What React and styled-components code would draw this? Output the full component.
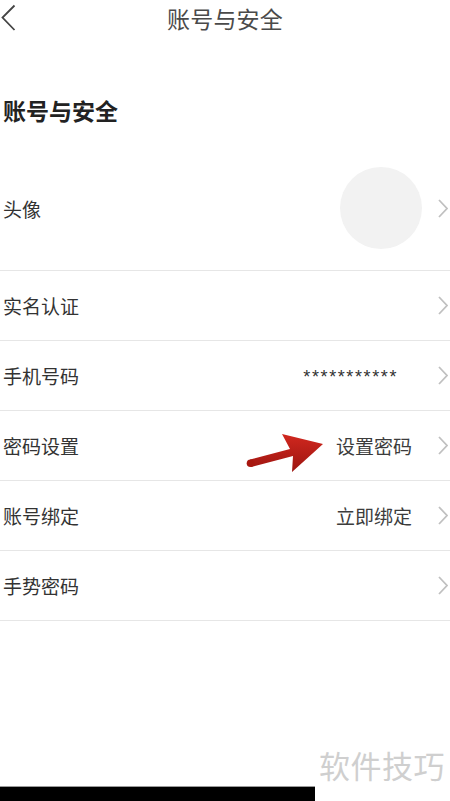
import styled, { createGlobalStyle } from "styled-components";

const GlobalStyle = createGlobalStyle`
  html, body {
    margin: 0;
    padding: 0;
    background: #fff;
  }
  body {
    font-family: "Noto Sans CJK SC", "Noto Sans", sans-serif;
    color: #333;
  }
`;

const Page = styled.div`
  position: relative;
  width: 450px;
  height: 801px;
  overflow: hidden;
  background: #fff;
`;

const NavBar = styled.div`
  height: 36px;
  display: flex;
  align-items: center;
  justify-content: center;
  position: relative;
`;

const BackButton = styled.div`
  position: absolute;
  left: 1px;
  top: 4px;
  width: 16px;
  height: 28px;
  display: flex;
  align-items: center;
`;

const NavTitle = styled.div`
  font-size: 23px;
  font-weight: 400;
  color: #4a4a4a;
  line-height: 36px;
  letter-spacing: 0.2px;
`;

const Heading = styled.h1`
  margin: 59px 0 21px;
  padding-left: 3px;
  font-size: 23px;
  line-height: 30px;
  font-weight: 700;
  color: #222;
`;

const List = styled.div`
  display: flex;
  flex-direction: column;
`;

const Row = styled.div`
  height: ${({ $tall }) => ($tall ? "124px" : "69px")};
  display: flex;
  align-items: center;
  padding: 0 2px 0 3px;
  border-bottom: 1px solid #e6e6e6;
`;

const Label = styled.div`
  flex: 1;
  font-size: 19px;
  color: #333;
`;

const Value = styled.div`
  font-size: 19px;
  color: #3c3c3c;
  margin-right: 26px;
`;

const Stars = styled.div`
  font-family: "Liberation Sans", sans-serif;
  font-size: 18px;
  letter-spacing: 1.6px;
  color: #333;
  margin-right: 40px;
  padding-top: 4px;
`;

const Avatar = styled.div`
  width: 82px;
  height: 82px;
  border-radius: 50%;
  background: #f2f2f2;
  margin-right: 16px;
`;

const Watermark = styled.div`
  position: absolute;
  right: 5px;
  bottom: 14px;
  font-size: 31px;
  color: #cfcfcf;
  letter-spacing: 0.5px;
`;

const BottomBar = styled.div`
  position: absolute;
  left: 0;
  bottom: 0;
  width: 315px;
  height: 14px;
  background: #000;
  border-top: 1px solid #9a9a9a;
`;

const ArrowMark = styled.svg`
  position: absolute;
  left: 240px;
  top: 428px;
`;

function Chevron() {
  return (
    <svg width="10" height="19" viewBox="0 0 10 19">
      <polyline
        points="1,1 9,9.5 1,18"
        fill="none"
        stroke="#c0c0c0"
        strokeWidth="1.8"
      />
    </svg>
  );
}

const rows = [
  { label: "实名认证" },
  { label: "手机号码", stars: "***********" },
  { label: "密码设置", value: "设置密码" },
  { label: "账号绑定", value: "立即绑定" },
  { label: "手势密码" },
];

export default function App() {
  return (
    <Page>
      <GlobalStyle />
      <NavBar>
        <BackButton>
          <svg width="16" height="28" viewBox="0 0 16 28">
            <polyline
              points="13.5,1.5 1.5,13.5 13.5,26"
              fill="none"
              stroke="#444"
              strokeWidth="1.8"
            />
          </svg>
        </BackButton>
        <NavTitle>账号与安全</NavTitle>
      </NavBar>

      <Heading>账号与安全</Heading>

      <List>
        <Row $tall>
          <Label>头像</Label>
          <Avatar />
          <Chevron />
        </Row>
        {rows.map((r) => (
          <Row key={r.label}>
            <Label>{r.label}</Label>
            {r.value && <Value>{r.value}</Value>}
            {r.stars && <Stars>{r.stars}</Stars>}
            <Chevron />
          </Row>
        ))}
      </List>

      <ArrowMark width="90" height="50" viewBox="240 428 90 50">
        <defs>
          <linearGradient id="arrowFill" x1="0" y1="0" x2="0" y2="1">
            <stop offset="0" stopColor="#d1281f" />
            <stop offset="1" stopColor="#9c1510" />
          </linearGradient>
        </defs>
        <polygon
          points="250,459.5 290,449 282,434 323,444 292,472 293,456 251,467"
          fill="url(#arrowFill)"
        />
        <circle cx="250.5" cy="463.3" r="3.8" fill="#a8170f" />
      </ArrowMark>

      <Watermark>软件技巧</Watermark>
      <BottomBar />
    </Page>
  );
}
